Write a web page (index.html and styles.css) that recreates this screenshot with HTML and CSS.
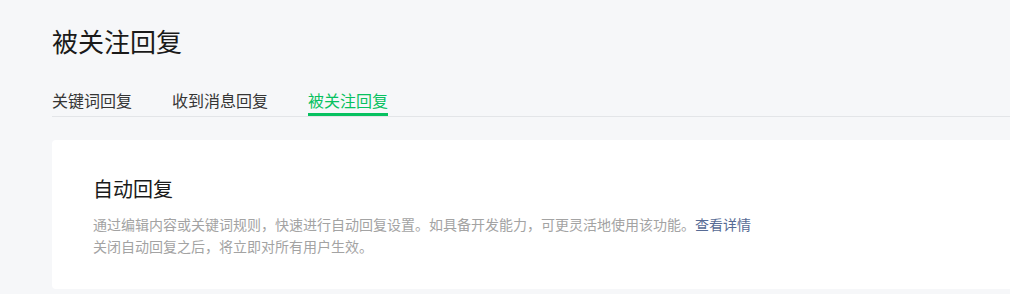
FILE: index.html
```html
<!DOCTYPE html>
<html lang="zh-CN">
<head>
<meta charset="utf-8">
<title>被关注回复</title>
<link rel="stylesheet" href="styles.css">
</head>
<body>
<div class="page">
  <h1 class="page-title">被关注回复</h1>
  <nav class="tabs">
    <a class="tab">关键词回复</a>
    <a class="tab">收到消息回复</a>
    <a class="tab tab-active">被关注回复</a>
  </nav>
  <section class="card">
    <h2 class="card-title">自动回复</h2>
    <div class="card-desc">
      <p class="desc-line">通过编辑内容或关键词规则，快速进行自动回复设置。如具备开发能力，可更灵活地使用该功能。<a class="link">查看详情</a></p>
      <p class="desc-line">关闭自动回复之后，将立即对所有用户生效。</p>
    </div>
  </section>
</div>
</body>
</html>
```
FILE: styles.css
```css
html, body {
  margin: 0;
  padding: 0;
  background: #f6f7f9;
  overflow: hidden;
}
body {
  font-family: "Noto Sans CJK SC", "Noto Sans", sans-serif;
  color: #353535;
}
.page {
  padding: 23px 0 0 52px;
}
.page-title {
  margin: 0;
  font-size: 26px;
  line-height: 36px;
  font-weight: 400;
  color: #1a1a1a;
}
.tabs {
  display: flex;
  gap: 40px;
  margin-top: 29px;
  border-bottom: 1px solid #e3e5e8;
}
.tab {
  display: block;
  font-size: 16px;
  line-height: 24px;
  padding-bottom: 1px;
  border-bottom: 3px solid transparent;
  color: #353535;
  cursor: pointer;
}
.tab-active {
  color: #07c160;
  border-bottom-color: #07c160;
}
.card {
  margin-top: 23px;
  background: #ffffff;
  border-radius: 4px 0 0 4px;
  padding: 35px 0 32px 41px;
}
.card-title {
  margin: 0;
  font-size: 20px;
  line-height: 28px;
  font-weight: 400;
  color: #1a1a1a;
}
.card-desc {
  margin-top: 10px;
}
.desc-line {
  margin: 0;
  font-size: 14px;
  line-height: 22px;
  color: #a3a3a3;
}
.link {
  color: #576b95;
  cursor: pointer;
}
```
